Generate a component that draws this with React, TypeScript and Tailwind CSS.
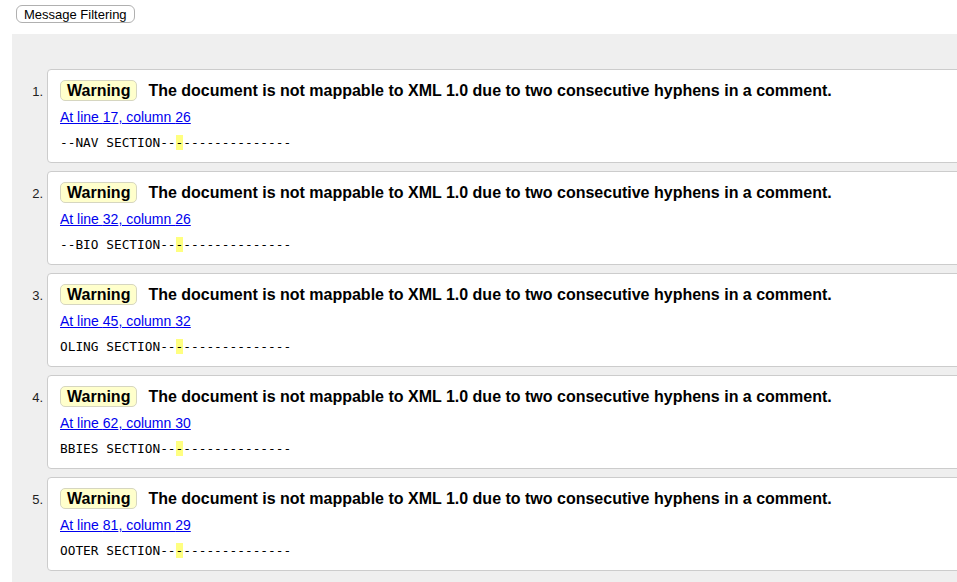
import React from "react";

const items = [
  { line: 17, col: 26, pre: "--NAV SECTION--" },
  { line: 32, col: 26, pre: "--BIO SECTION--" },
  { line: 45, col: 32, pre: "OLING SECTION--" },
  { line: 62, col: 30, pre: "BBIES SECTION--" },
  { line: 81, col: 29, pre: "OOTER SECTION--" },
];

export default function App() {
  return (
    <div
      className="w-[957px] h-[582px] overflow-hidden bg-white text-black"
      style={{ fontFamily: '"Liberation Sans", Arial, sans-serif' }}
    >
      <div className="flex pt-[5px] pl-[16px]">
        <button className="h-[18px] px-[7px] text-[13px] leading-none border border-[#b0b0b0] rounded-[6px] bg-white text-black">
          Message Filtering
        </button>
      </div>
      <div className="mt-[11px] ml-[12px] w-[1000px] bg-[#efefef] pt-[35px] pb-[20px]">
        <ol className="flex flex-col gap-[8px]">
          {items.map((it, i) => (
            <li key={i} className="flex">
              <div className="w-[35px] shrink-0 text-right pr-[4px] pt-[15px] text-[13px] leading-[15px] text-[#222]">
                {i + 1}.
              </div>
              <div className="flex-1 bg-white border border-[#cccccc] rounded-[4px] pt-[10px] pb-[11px] px-[12px]">
                <div className="flex items-center h-[21px]">
                  <span className="h-[21px] flex items-center px-[6px] bg-[#ffffcc] border border-[#d6d6c0] rounded-[5px] text-[16px] font-bold leading-none">
                    Warning
                  </span>
                  <span className="ml-[11px] text-[16px] font-bold leading-none">
                    The document is not mappable to XML 1.0 due to two consecutive hyphens in a comment.
                  </span>
                </div>
                <div className="mt-[8px] leading-[16px] text-[14px]">
                  <a href="#" className="text-[#0000ee] underline">
                    At line {it.line}, column {it.col}
                  </a>
                </div>
                <div
                  className="mt-[9px] leading-[17px] text-[12.8px] whitespace-pre"
                  style={{ fontFamily: '"DejaVu Sans Mono", monospace' }}
                >
                  {it.pre}
                  <span className="bg-[#ffff80]">-</span>
                  {"--------------"}
                </div>
              </div>
            </li>
          ))}
        </ol>
      </div>
    </div>
  );
}
